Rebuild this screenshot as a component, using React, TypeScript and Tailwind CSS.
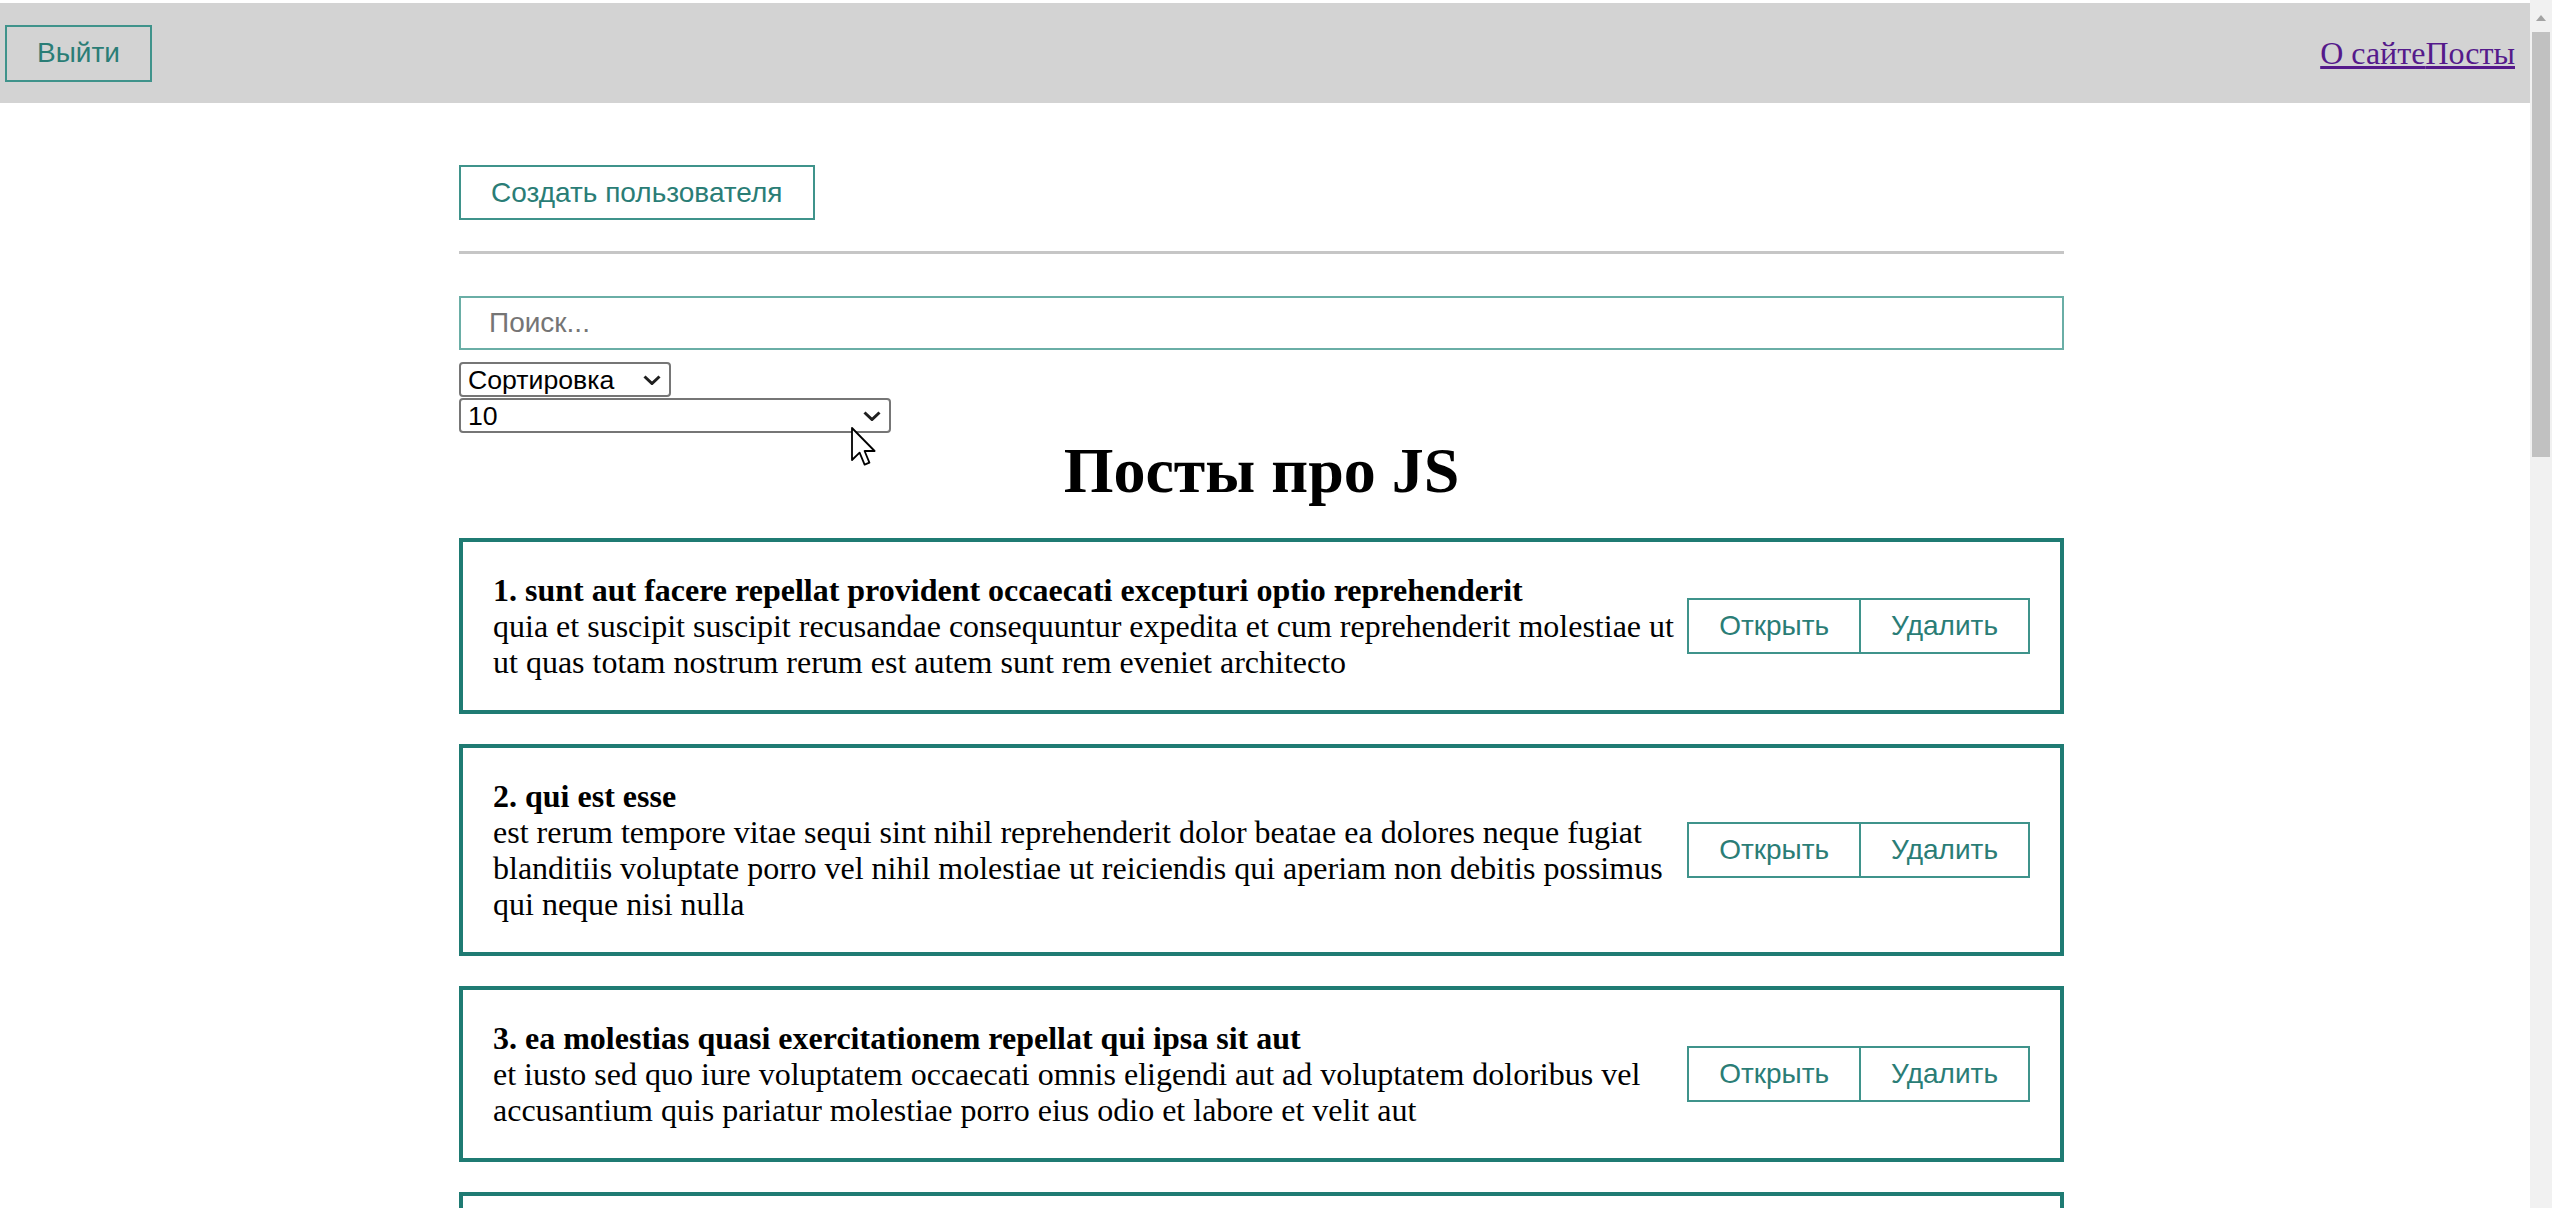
import { useState } from 'react'

type Post = { id: number; title: string; body: string }

const posts: Post[] = [
  {
    id: 1,
    title: 'sunt aut facere repellat provident occaecati excepturi optio reprehenderit',
    body: 'quia et suscipit suscipit recusandae consequuntur expedita et cum reprehenderit molestiae ut ut quas totam nostrum rerum est autem sunt rem eveniet architecto',
  },
  {
    id: 2,
    title: 'qui est esse',
    body: 'est rerum tempore vitae sequi sint nihil reprehenderit dolor beatae ea dolores neque fugiat blanditiis voluptate porro vel nihil molestiae ut reiciendis qui aperiam non debitis possimus qui neque nisi nulla',
  },
  {
    id: 3,
    title: 'ea molestias quasi exercitationem repellat qui ipsa sit aut',
    body: 'et iusto sed quo iure voluptatem occaecati omnis eligendi aut ad voluptatem doloribus vel accusantium quis pariatur molestiae porro eius odio et labore et velit aut',
  },
  {
    id: 4,
    title: 'eum et est occaecati',
    body: 'ullam et saepe reiciendis voluptatem adipisci sit amet autem assumenda provident rerum culpa quis hic commodi nesciunt rem tenetur doloremque ipsam iure quis sunt voluptatem rerum illo velit',
  },
]

const btn =
  "border-2 border-[#3f938b] bg-transparent px-[30px] font-['Liberation_Sans',Arial,sans-serif] text-[28px] leading-[normal] text-[#2a7d76]"

function Chevron() {
  return (
    <svg width="18" height="10" viewBox="0 0 18 10" className="pointer-events-none absolute right-[10px] top-[13px]">
      <path d="M1.5 1.5 L9 8.5 L16.5 1.5" stroke="#1f1f1f" strokeWidth="3" fill="none" />
    </svg>
  )
}

function Select({ width, value, options }: { width: string; value: string; options: string[] }) {
  return (
    <div className="relative w-fit">
      <select
        defaultValue={value}
        className={`${width} block h-[35px] appearance-none rounded-[4px] border-2 border-[#767676] bg-white pl-[7px] font-['Liberation_Sans',Arial,sans-serif] text-[26.67px] leading-[normal] text-black outline-none`}
      >
        {options.map(o => (
          <option key={o}>{o}</option>
        ))}
      </select>
      <Chevron />
    </div>
  )
}

function PostItem({ post }: { post: Post }) {
  return (
    <div className="mt-[30px] flex items-center justify-between border-4 border-[#1f7b73] p-[30px]">
      <div className="min-w-0 flex-1 leading-[36px]">
        <strong className="font-bold">
          {post.id}. {post.title}
        </strong>
        <div>{post.body}</div>
      </div>
      <div className="flex shrink-0">
        <button className={`${btn} h-[56px]`}>Открыть</button>
        <button className={`${btn} -ml-[2px] h-[56px]`}>Удалить</button>
      </div>
    </div>
  )
}

function Scrollbar() {
  return (
    <div className="flex w-[22px] shrink-0 flex-col bg-[#f1f1f1] pt-[3px]">
      <div className="flex h-[29px] items-center justify-center">
        <svg width="10" height="6" viewBox="0 0 10 6">
          <path d="M0 6 L5 0 L10 6 Z" fill="#a3a3a3" />
        </svg>
      </div>
      <div className="mx-[2px] h-[425px] bg-[#c1c1c1]" />
    </div>
  )
}

export default function App() {
  const [query, setQuery] = useState('')

  return (
    <div className="flex h-[1208px] overflow-hidden bg-white font-['Liberation_Serif','Times_New_Roman',serif] text-[32px] leading-[normal] text-black">
      <div className="relative min-w-0 flex-1 pt-[3px]">
        <nav className="flex h-[100px] items-center bg-[#d3d3d3] pl-[5px] pr-[15px]">
          <button className={`${btn} h-[57px]`}>Выйти</button>
          <div className="ml-auto flex">
            <a href="#" className="text-[#551a8b] underline">
              О сайте
            </a>
            <a href="#" className="text-[#551a8b] underline">
              Посты
            </a>
          </div>
        </nav>

        <div className="mx-auto w-[1612px] pr-[7px] pt-[62px]">
          <button className={`${btn} h-[55px]`}>Создать пользователя</button>
          <div className="mt-[31px] h-[3px] bg-[#c6c6c6]" />
          <input
            value={query}
            onChange={e => setQuery(e.target.value)}
            placeholder="Поиск..."
            className="mt-[42px] block h-[54px] w-full border-2 border-[#6aaea6] px-[28px] font-['Liberation_Sans',Arial,sans-serif] text-[28px] outline-none placeholder:text-[#757575]"
          />
          <div className="mt-[12px] flex flex-col gap-[1px]">
            <Select width="w-[212px]" value="Сортировка" options={['Сортировка', 'По названию', 'По описанию']} />
            <Select width="w-[432px]" value="10" options={['5', '10', '25', 'Показать все посты']} />
          </div>
          <h1 className="mt-[1px] text-center text-[64px] font-bold leading-[normal]">Посты про JS</h1>
          {posts.map(p => (
            <PostItem key={p.id} post={p} />
          ))}
        </div>

        {/* курсор мыши поверх селекта */}
        <svg width="26" height="40" viewBox="0 0 13 20" className="pointer-events-none absolute left-[851px] top-[427px]">
          <path d="M0.5 0.5 L0.5 16.5 L4.3 12.8 L6.8 18.8 L9.2 17.8 L6.8 12 L11.8 12 Z" fill="#fff" stroke="#000" strokeWidth="0.9" strokeLinejoin="round" />
        </svg>
      </div>
      <Scrollbar />
    </div>
  )
}
